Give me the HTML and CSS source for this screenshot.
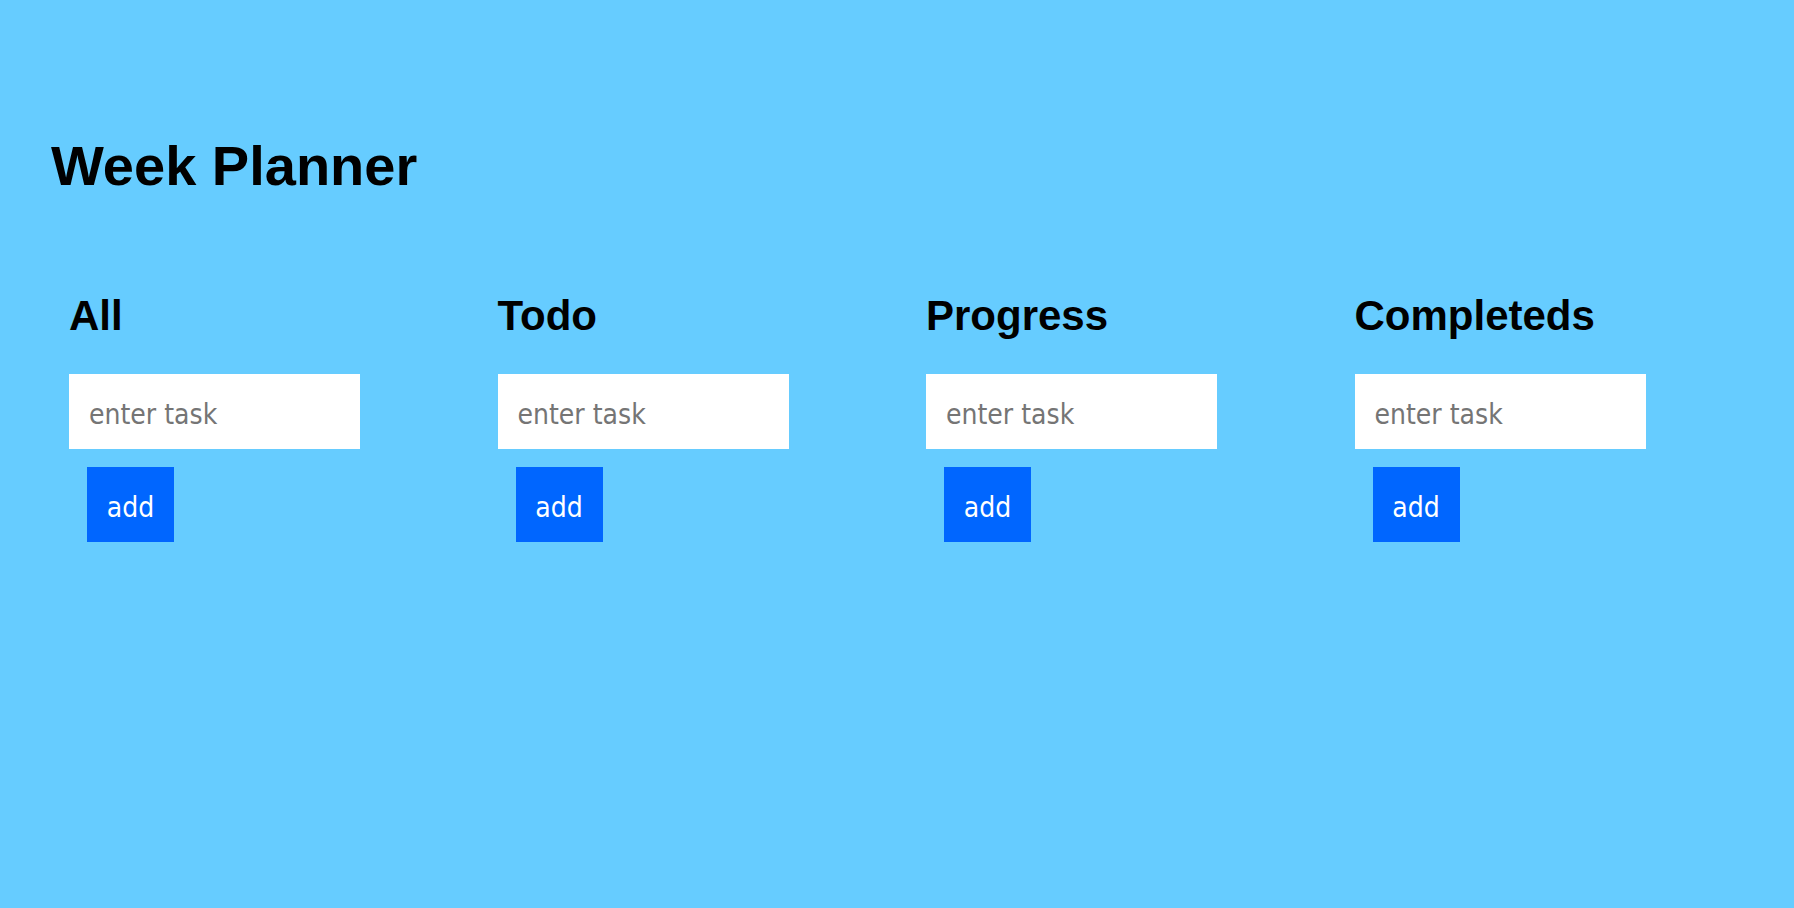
FILE: index.html
```html
<!DOCTYPE html>
<html lang="en">
<head>
<meta charset="utf-8">
<title>Week Planner</title>
<link rel="stylesheet" href="styles.css">
</head>
<body>
<header class="header">
  <h1 class="title">Week Planner</h1>
</header>
<main class="board">
  <section class="column">
    <h2 class="column-title">All</h2>
    <input class="task-input" type="text" placeholder="enter task">
    <button class="add-btn" type="button">add</button>
  </section>
  <section class="column">
    <h2 class="column-title">Todo</h2>
    <input class="task-input" type="text" placeholder="enter task">
    <button class="add-btn" type="button">add</button>
  </section>
  <section class="column">
    <h2 class="column-title">Progress</h2>
    <input class="task-input" type="text" placeholder="enter task">
    <button class="add-btn" type="button">add</button>
  </section>
  <section class="column">
    <h2 class="column-title">Completeds</h2>
    <input class="task-input" type="text" placeholder="enter task">
    <button class="add-btn" type="button">add</button>
  </section>
</main>
</body>
</html>
```
FILE: styles.css
```css
html, body {
  margin: 0;
  padding: 0;
}
body {
  background: #66ccff;
  min-height: 908px;
  font-family: "Liberation Sans", Arial, sans-serif;
  font-size: 28px;
  color: #000;
}
.header {
  padding: 133px 0 0 51px;
}
.title {
  margin: 0;
  font-size: 56px;
  font-weight: bold;
}
.board {
  display: grid;
  grid-template-columns: repeat(4, 1fr);
  padding: 94px 40px 0;
}
.column {
  display: flex;
  flex-direction: column;
  align-items: flex-start;
  padding-left: 29px;
}
.column-title {
  margin: 0 0 34px;
  font-size: 42px;
  font-weight: bold;
}
.task-input {
  box-sizing: border-box;
  width: 291px;
  height: 75px;
  padding: 6px 20px 0;
  border: none;
  outline: none;
  background: #fff;
  font-family: "DejaVu Sans Condensed", "DejaVu Sans", sans-serif;
  font-stretch: condensed;
  font-size: 28px;
  color: #000;
}
.task-input::placeholder {
  color: #757575;
  opacity: 1;
}
.add-btn {
  box-sizing: border-box;
  margin: 18px 0 0 18px;
  width: 87px;
  height: 75px;
  padding: 6px 0 0;
  border: none;
  background: #0066ff;
  color: #fff;
  font-family: "DejaVu Sans Condensed", "DejaVu Sans", sans-serif;
  font-stretch: condensed;
  font-size: 28px;
}
```
